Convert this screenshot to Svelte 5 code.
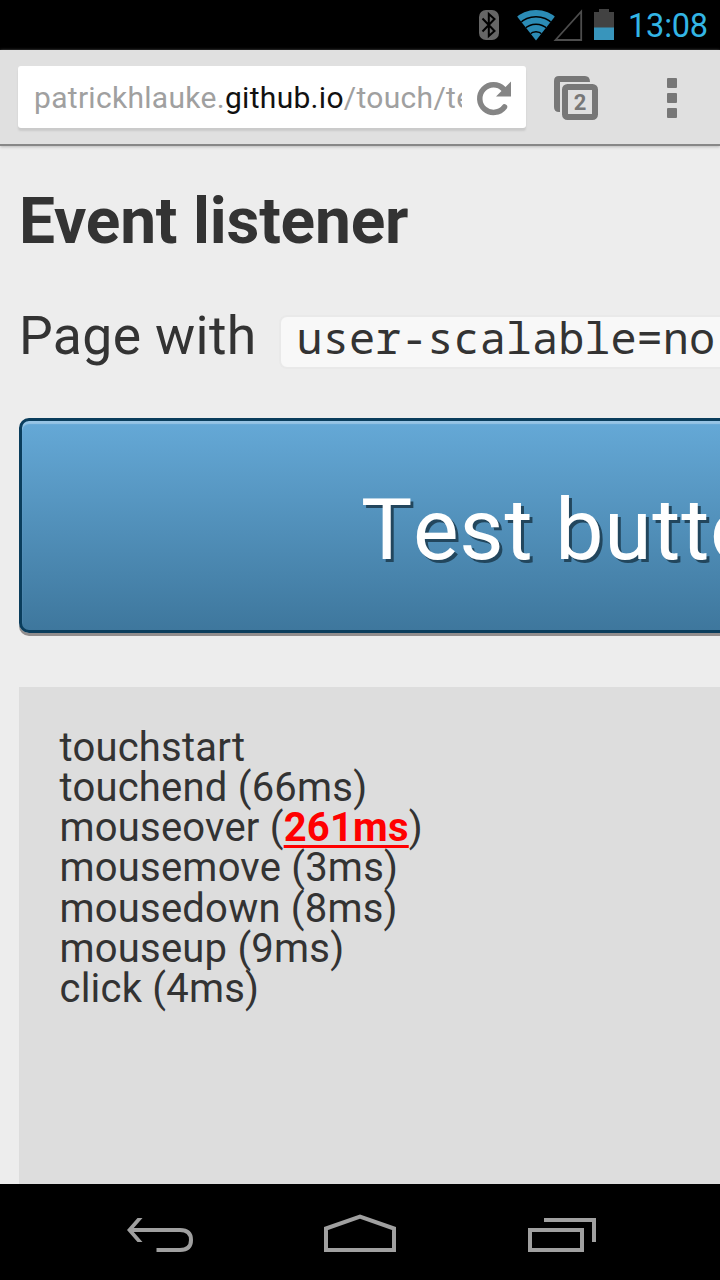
<script>
  const events = [
    { name: 'touchstart' },
    { name: 'touchend', delay: '66ms' },
    { name: 'mouseover', delay: '261ms', slow: true },
    { name: 'mousemove', delay: '3ms' },
    { name: 'mousedown', delay: '8ms' },
    { name: 'mouseup', delay: '9ms' },
    { name: 'click', delay: '4ms' }
  ];
</script>

<div class="screen">
  <div class="status">
    <svg width="142" height="50" viewBox="0 0 142 50">
      <rect x="1" y="10" width="20" height="30" rx="7" fill="#666" />
      <path d="M4.500 18.500 L16.500 31 L10.800 36 V14 L16.500 19 L4.500 31.500" fill="none" stroke="#000" stroke-width="2" />
      <clipPath id="fan"><path d="M58 40.500 L37.500 14.500 V5 H78.500 V14.500 Z" /></clipPath>
      <g clip-path="url(#fan)">
        <circle cx="58" cy="40.500" r="30.500" fill="#2b8bb5" />
        <g fill="none" stroke="#000" stroke-width="1.500">
          <circle cx="58" cy="40.500" r="23.800" />
          <circle cx="58" cy="40.500" r="16.300" />
          <circle cx="58" cy="40.500" r="8.800" />
        </g>
      </g>
      <path d="M77.500 40 H103.200 V11.500 Z" fill="none" stroke="#4d4d4d" stroke-width="1.800" />
      <path d="M116 12 H121 V9 H131 V12 H136 V28 H116 Z" fill="#424242" />
      <rect x="116" y="27.500" width="20" height="12.500" fill="#3895bc" />
    </svg>
    <span class="clock">13:08</span>
  </div>

  <div class="toolbar">
    <div class="address">
      <div class="url">patrickhlauke.<b>github.io</b>/touch/te</div>
      <svg width="64" height="62" viewBox="0 0 64 62">
        <path d="M42.500 39.500 A13.800 13.800 0 1 1 41.500 21.500" fill="none" stroke="#858585" stroke-width="5.500" stroke-linecap="round" transform="translate(0 1.500)" />
        <path d="M49 15.500 V30.500 H34 Z" fill="#858585" />
      </svg>
    </div>
    <div class="tabs">
      <svg width="46" height="46" viewBox="0 0 46 46">
        <path d="M0 36 V5 Q0 0 5 0 H31 Q36 0 36 6 H6 V36 H5 Q0 36 0 31 Z" fill="#777" />
        <rect x="11" y="11" width="30" height="30" rx="2.500" fill="#e0e0e0" stroke="#777" stroke-width="6" />
        <text x="26" y="34" text-anchor="middle">2</text>
      </svg>
    </div>
    <div class="dots"><i></i><i></i><i></i></div>
  </div>

  <main>
    <h1>Event listener</h1>
    <p>Page with <code>user-scalable=no</code></p>
    <button>Test button</button>
    <div class="log">
      {#each events as e}
        <div>{e.name}{#if e.delay}{' '}({#if e.slow}<strong>{e.delay}</strong>{:else}{e.delay}{/if}){/if}</div>
      {/each}
    </div>
  </main>

  <nav>
    <svg width="720" height="96" viewBox="0 0 720 96" fill="none" stroke="#a0a0a0" stroke-width="4">
      <path d="M130 46 H180 Q191 46 191 56 Q191 66 180 66 H156.500" />
      <path d="M127 46 L137.500 34 H142.500 L132 46 L142.500 58 H137.500 Z" fill="#a0a0a0" stroke="none" />
      <path d="M326 66 V44.500 L360 32.500 L394 44.500 V66 Z" />
      <rect x="530" y="46" width="52" height="20" />
      <path d="M544 36 H594 V58" />
    </svg>
  </nav>
</div>

<style>
  :global(body) { margin: 0; background: #ededed; overflow: hidden; }
  .screen {
    width: 720px; height: 1280px; overflow: hidden;
    display: flex; flex-direction: column;
    font-family: Roboto, sans-serif; color: #333; background: #ededed;
  }
  .status {
    height: 50px; flex: none; background: #000; box-sizing: border-box;
    display: flex; justify-content: flex-end; padding-right: 12px;
  }
  .status svg { flex: none; margin-right: 8px; }
  .clock { font-size: 32.5px; line-height: 52px; letter-spacing: -0.2px; color: #33b5e5; width: 80px; white-space: nowrap; }
  .toolbar {
    height: 96px; flex: none; box-sizing: border-box; background: #e0e0e0;
    border-bottom: 2px solid #878787; box-shadow: 0 1px 3px #bbb;
    display: flex; align-items: flex-start; padding: 16px 43px 0 18px;
  }
  .address {
    width: 508px; height: 62px; flex: none; display: flex;
    background: #fff; border-radius: 3px; box-shadow: 0 3px 2px #cacaca;
  }
  .url {
    margin-left: 16px; width: 428px; overflow: hidden; white-space: nowrap;
    font-size: 30px; line-height: 64px; letter-spacing: 0.3px; color: #a0a0a0;
  }
  .url b { font-weight: 400; color: #111; }
  .address svg { flex: none; }
  .tabs { margin: 10px 0 0 28px; }
  .tabs svg { display: block; }
  .tabs text { font: 700 22px Roboto, sans-serif; fill: #777; }
  .dots { margin: 12px 0 0 auto; display: flex; flex-direction: column; gap: 5px; }
  .dots i { width: 10px; height: 10px; background: #777; border-radius: 1px; }
  main { flex: 1; min-height: 0; padding: 43px 0 0 19px; overflow: hidden; }
  h1 { margin: 0; font-size: 64px; line-height: 66px; letter-spacing: -0.2px; font-weight: 700; white-space: nowrap; }
  p { margin: 51px 0 0; height: 60px; font-size: 53.5px; line-height: 60px; letter-spacing: 0.35px; white-space: nowrap; display: flex; }
  code {
    margin: 9px 0 0 22px; height: 50px; padding: 0 16px;
    border: 2px solid #e9e9e9; border-radius: 8px; background: #f8f8f8;
    font: 43.6px/40px "Droid Sans Mono", "Noto Sans Mono", "DejaVu Sans Mono", monospace; letter-spacing: 0;
  }
  button {
    display: block; margin: 52px 0 0; width: 1100px; height: 215px; box-sizing: border-box;
    padding: 8px 0 0 339px; text-align: left;
    border: 3px solid #0a3d5c; border-radius: 10px;
    background: linear-gradient(#65a9d7, #3e779d);
    box-shadow: 0 3px 0 #918d8d, inset 0 3px 1px #96c4e5;
    font: 86px/100px Roboto, sans-serif; font-kerning: none; letter-spacing: 0.7px; color: #fff; text-shadow: 3px 3px 0 #22465d;
    white-space: nowrap;
  }
  .log {
    margin-top: 54px; height: 700px; padding: 41px 40.500px; box-sizing: border-box;
    width: 1100px; background: #ddd; font-size: 40px; line-height: 40.15px; letter-spacing: 0.21px; white-space: nowrap;
  }
  strong { color: #f00; text-decoration: underline; text-decoration-thickness: 3px; text-underline-offset: 4px; text-decoration-skip-ink: none; }
  nav { height: 96px; flex: none; background: #000; }
  nav svg { display: block; }
</style>
